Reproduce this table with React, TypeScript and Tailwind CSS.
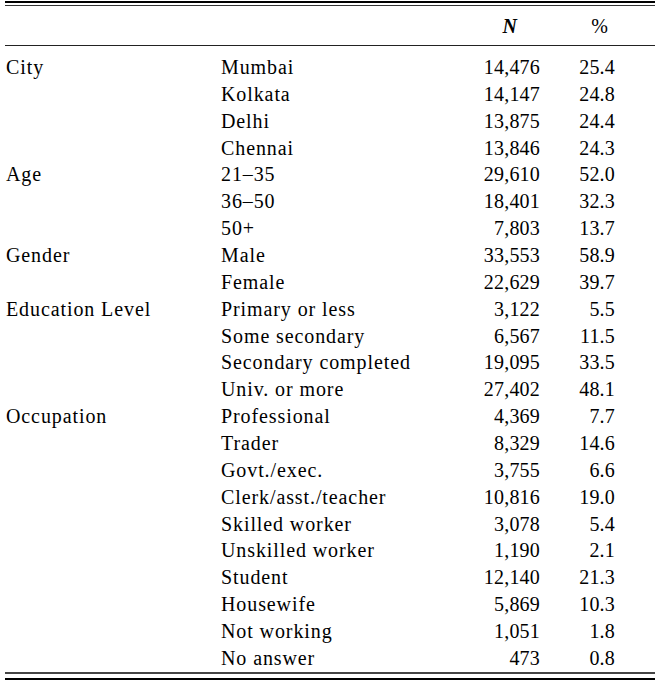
import React from 'react';

type Row = { group?: string; item: string; n: string; pct: string };

const rows: Row[] = [
  { group: 'City', item: 'Mumbai', n: '14,476', pct: '25.4' },
  { item: 'Kolkata', n: '14,147', pct: '24.8' },
  { item: 'Delhi', n: '13,875', pct: '24.4' },
  { item: 'Chennai', n: '13,846', pct: '24.3' },
  { group: 'Age', item: '21–35', n: '29,610', pct: '52.0' },
  { item: '36–50', n: '18,401', pct: '32.3' },
  { item: '50+', n: '7,803', pct: '13.7' },
  { group: 'Gender', item: 'Male', n: '33,553', pct: '58.9' },
  { item: 'Female', n: '22,629', pct: '39.7' },
  { group: 'Education Level', item: 'Primary or less', n: '3,122', pct: '5.5' },
  { item: 'Some secondary', n: '6,567', pct: '11.5' },
  { item: 'Secondary completed', n: '19,095', pct: '33.5' },
  { item: 'Univ. or more', n: '27,402', pct: '48.1' },
  { group: 'Occupation', item: 'Professional', n: '4,369', pct: '7.7' },
  { item: 'Trader', n: '8,329', pct: '14.6' },
  { item: 'Govt./exec.', n: '3,755', pct: '6.6' },
  { item: 'Clerk/asst./teacher', n: '10,816', pct: '19.0' },
  { item: 'Skilled worker', n: '3,078', pct: '5.4' },
  { item: 'Unskilled worker', n: '1,190', pct: '2.1' },
  { item: 'Student', n: '12,140', pct: '21.3' },
  { item: 'Housewife', n: '5,869', pct: '10.3' },
  { item: 'Not working', n: '1,051', pct: '1.8' },
  { item: 'No answer', n: '473', pct: '0.8' },
];

export default function App() {
  return (
    <div className="w-[663px] h-[683px] bg-white text-black font-['Liberation_Serif',serif]">
      <div className="ml-[5px] w-[650px] pt-[1px]">
        {/* top double rule */}
        <div className="h-[2px] bg-black" />
        <div className="h-[2px]" />
        <div className="h-[1px] bg-[#333]" />

        {/* header */}
        <div className="flex h-[39px] items-center text-[20px]">
          <div className="w-[216px]" />
          <div className="w-[239px]" />
          <div className="w-[80px] text-right pr-[23px] font-bold italic">N</div>
          <div className="w-[75px] text-right pr-[7px]">%</div>
        </div>
        <div className="h-[1px] bg-[#222]" />

        {/* body */}
        <div className="pt-[8px]">
          {rows.map((r, i) => (
            <div key={i} className="flex text-[20px] leading-[26.86px]">
              <div className="w-[216px] pl-[1px] tracking-[0.9px] whitespace-nowrap">{r.group ?? ''}</div>
              <div className="w-[239px] tracking-[0.9px] whitespace-nowrap">{r.item}</div>
              <div className="w-[80px] text-right tracking-[0.2px]">{r.n}</div>
              <div className="w-[75px] text-right tracking-[0.2px]">{r.pct}</div>
            </div>
          ))}
        </div>

        {/* bottom double rule */}
        <div className="h-[2px] bg-[#444]" />
        <div className="h-[4px]" />
        <div className="h-[2px] bg-black" />
      </div>
    </div>
  );
}
